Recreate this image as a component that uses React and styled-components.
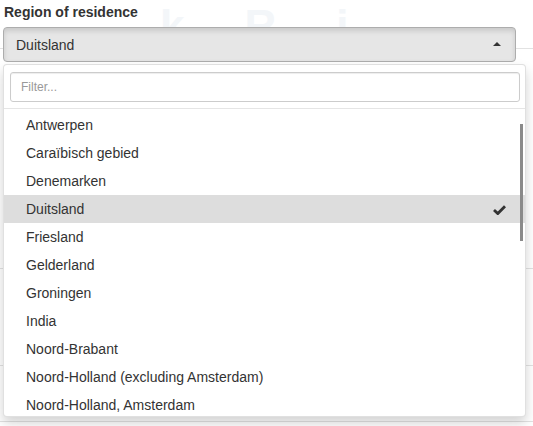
import React from 'react';
import styled, { createGlobalStyle } from 'styled-components';

const GlobalStyle = createGlobalStyle`
  html, body {
    margin: 0;
    padding: 0;
    background: #fff;
  }
  body {
    font-family: "Liberation Sans", Arial, sans-serif;
    font-size: 14px;
    color: #333;
  }
`;

const Page = styled.div`
  position: relative;
  width: 533px;
  height: 426px;
  overflow: hidden;
  background: #fff;
`;

/* faint page content that sits behind the open dropdown */
const Backdrop = styled.div`
  position: absolute;
  inset: 0;
  z-index: 0;
  display: flex;
  flex-direction: column;
`;

const Watermark = styled.div`
  height: 48px;
  padding: 4px 0 0 160px;
  box-sizing: border-box;
  font-family: "Liberation Sans", Arial, sans-serif;
  font-weight: bold;
  font-size: 44px;
  line-height: 44px;
  letter-spacing: 60px;
  color: #f3f6f9;
  white-space: nowrap;
`;

const Band = styled.div`
  flex: 0 0 auto;
  height: ${props => props.h}px;
  border-top: 1px solid #e2e2e2;
  box-sizing: border-box;
`;

const Field = styled.div`
  position: relative;
  z-index: 1;
  padding: 4px 7px 0 3px;
`;

const Label = styled.label`
  display: block;
  margin: 0 0 6px 1px;
  font-weight: bold;
  font-size: 14px;
  line-height: 17px;
  color: #333;
`;

const Toggle = styled.button`
  display: flex;
  align-items: center;
  justify-content: space-between;
  box-sizing: border-box;
  width: 513px;
  height: 35px;
  padding: 0 14px 0 12px;
  font-family: inherit;
  font-size: 14px;
  color: #333;
  background: #e6e6e6;
  border: 1px solid #adadad;
  border-radius: 4px;
  box-shadow: inset 0 3px 5px rgba(0, 0, 0, 0.125);
  cursor: pointer;
`;

const Caret = styled.span`
  width: 0;
  height: 0;
  border-left: 4px solid transparent;
  border-right: 4px solid transparent;
  border-bottom: 4px solid #333;
  margin-top: -1px;
`;

const Menu = styled.div`
  position: relative;
  box-sizing: border-box;
  width: 523px;
  margin-top: 2px;
  height: 353px;
  background: #fff;
  border: 1px solid rgba(0, 0, 0, 0.12);
  border-radius: 4px;
  box-shadow: 0 6px 12px rgba(0, 0, 0, 0.175);
  overflow: hidden;
`;

const SearchBox = styled.div`
  padding: 7px 5px 6px 6px;
  border-bottom: 1px solid #e5e5e5;
`;

const FilterInput = styled.input`
  box-sizing: border-box;
  width: 100%;
  height: 30px;
  padding: 5px 10px;
  font-family: inherit;
  font-size: 12px;
  color: #555;
  border: 1px solid #ccc;
  border-radius: 3px;
  box-shadow: inset 0 1px 1px rgba(0, 0, 0, 0.075);
  outline: none;

  &::placeholder {
    color: #999;
  }
`;

const List = styled.ul`
  list-style: none;
  margin: 0;
  padding: 2px 0 0;
`;

const Item = styled.li`
  display: flex;
  align-items: center;
  justify-content: space-between;
  height: 28px;
  padding: 0 19px 0 22px;
  font-size: 14px;
  color: #333;
  background: ${props => (props.selected ? '#ddd' : 'transparent')};
`;

const ScrollThumb = styled.div`
  position: absolute;
  right: 2px;
  top: 59px;
  width: 3px;
  height: 117px;
  background: #8a8a8a;
`;

const CheckIcon = () => (
  <svg width="13" height="11" viewBox="0 0 13 11">
    <path d="M1 6 L4.8 9.6 L12 2.2" fill="none" stroke="#333" strokeWidth="2.8" strokeLinejoin="miter" />
  </svg>
);

const regions = [
  'Antwerpen',
  'Caraïbisch gebied',
  'Denemarken',
  'Duitsland',
  'Friesland',
  'Gelderland',
  'Groningen',
  'India',
  'Noord-Brabant',
  'Noord-Holland (excluding Amsterdam)',
  'Noord-Holland, Amsterdam',
];

export default function App() {
  const selected = 'Duitsland';
  return (
    <Page>
      <GlobalStyle />
      <Backdrop>
        <Watermark>kRi</Watermark>
        <Band h={220} />
        <Band h={97} />
        <Band h={56} />
        <Band h={5} />
      </Backdrop>
      <Field>
        <Label>Region of residence</Label>
        <Toggle type="button">
          <span>{selected}</span>
          <Caret />
        </Toggle>
        <Menu>
          <SearchBox>
            <FilterInput placeholder="Filter..." />
          </SearchBox>
          <List>
            {regions.map(name => (
              <Item key={name} selected={name === selected}>
                <span>{name}</span>
                {name === selected && <CheckIcon />}
              </Item>
            ))}
          </List>
          <ScrollThumb />
        </Menu>
      </Field>
    </Page>
  );
}
